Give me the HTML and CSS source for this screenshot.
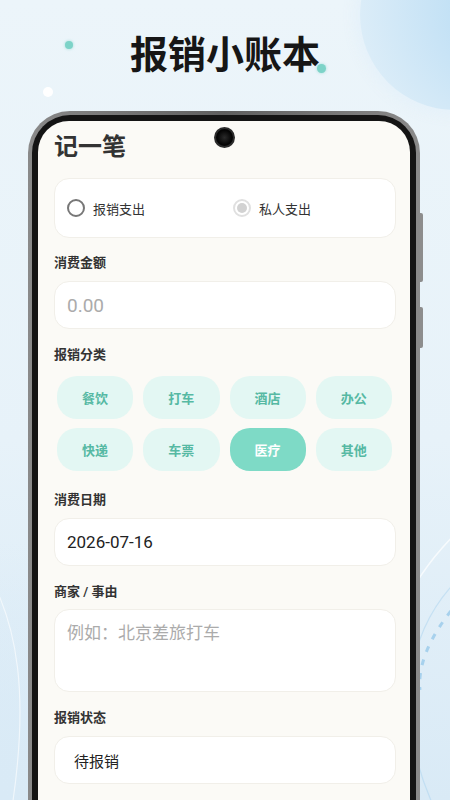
FILE: index.html
```html
<!DOCTYPE html>
<html lang="zh-CN">
<head>
    <meta charset="UTF-8">
    <meta name="viewport" content="width=device-width, initial-scale=1.0">
    <title>报销小账本</title>
    <link rel="stylesheet" href="styles.css">
</head>
<body>
    <div class="stage">
        <!-- decorative background bits -->
        <span class="bubble"></span>
        <span class="dot dot-teal dot-left"></span>
        <span class="dot dot-white"></span>
        <span class="dot dot-teal dot-right"></span>
        <svg class="swoosh" width="450" height="800" viewBox="0 0 450 800">
            <path d="M470 520 C 380 600, 360 700, 420 820" fill="none" stroke="#ffffff" stroke-opacity="0.7" stroke-width="1.5"/>
            <path d="M480 560 C 400 620, 390 720, 440 820" fill="none" stroke="#a9d4ef" stroke-opacity="0.5" stroke-width="1.2"/>
            <path d="M460 600 C 425 640, 418 670, 420 690" fill="none" stroke="#8ec4e8" stroke-opacity="0.7" stroke-width="3" stroke-dasharray="6 8"/>
            <path d="M-20 560 C 20 620, 30 700, 10 820" fill="none" stroke="#ffffff" stroke-opacity="0.6" stroke-width="1.2"/>
        </svg>

        <h1 class="promo-title">报销小账本</h1>

        <div class="phone">
            <div class="bezel">
                <div class="screen">
                    <span class="camera"></span>
                    <h2 class="page-title">记一笔</h2>

                    <div class="type-card">
                        <label class="radio">
                            <span class="radio-mark"></span>
                            <span>报销支出</span>
                        </label>
                        <label class="radio radio-disabled">
                            <span class="radio-mark"><span class="radio-dot"></span></span>
                            <span>私人支出</span>
                        </label>
                    </div>

                    <div class="field field-first">
                        <div class="field-label">消费金额</div>
                        <div class="input amount placeholder">0.00</div>
                    </div>

                    <div class="field">
                        <div class="field-label label-chips">报销分类</div>
                        <div class="chips">
                            <span class="chip">餐饮</span>
                            <span class="chip">打车</span>
                            <span class="chip">酒店</span>
                            <span class="chip">办公</span>
                            <span class="chip">快递</span>
                            <span class="chip">车票</span>
                            <span class="chip active">医疗</span>
                            <span class="chip">其他</span>
                        </div>
                    </div>

                    <div class="field field-after-chips">
                        <div class="field-label">消费日期</div>
                        <div class="input date">2026-07-16</div>
                    </div>

                    <div class="field">
                        <div class="field-label label-tight">商家 / 事由</div>
                        <div class="input textarea placeholder">例如：北京差旅打车</div>
                    </div>

                    <div class="field">
                        <div class="field-label">报销状态</div>
                        <div class="input select">待报销</div>
                    </div>
                </div>
            </div>
        </div>
    </div>
</body>
</html>
```

FILE: styles.css
```css
body {
    margin: 0;
    padding: 0;
    font-family: Roboto, "Noto Sans CJK SC", sans-serif;
    color: #333;
}

.stage {
    position: relative;
    width: 450px;
    height: 800px;
    overflow: hidden;
    background:
        radial-gradient(circle at 0% 100%, #d9eaf6 0, rgba(217, 234, 246, 0) 260px),
        linear-gradient(180deg, #ecf5fa 0%, #e7f2f9 55%, #d9eaf6 100%);
}

/* big soft circle in the top right corner */
.bubble {
    position: absolute;
    top: -80px;
    right: -100px;
    width: 190px;
    height: 190px;
    border-radius: 50%;
    background: radial-gradient(circle at 80% 45%, #b3daf3 0%, #c9e4f6 45%, #dcedf8 85%, #e4f1f9 100%);
    box-shadow: 0 0 12px 6px rgba(228, 241, 249, 0.9);
}

.dot {
    position: absolute;
    border-radius: 50%;
}

.dot-teal {
    background: #7dd3c8;
    box-shadow: 0 0 3px rgba(125, 211, 200, 0.7);
}

.dot-left {
    left: 65px;
    top: 41px;
    width: 8px;
    height: 8px;
}

.dot-right {
    left: 317px;
    top: 64px;
    width: 9px;
    height: 9px;
}

.dot-white {
    left: 43px;
    top: 87px;
    width: 10px;
    height: 10px;
    background: #fff;
}

.swoosh {
    position: absolute;
    left: 0;
    top: 0;
}

.promo-title {
    position: relative;
    margin: 0;
    padding-top: 31px;
    font-size: 38px;
    line-height: 48px;
    font-weight: 700;
    text-align: center;
    color: #161616;
}

.phone {
    position: relative;
    box-sizing: border-box;
    width: 392px;
    margin: 32px 0 0 28px;
    padding: 4px 4px 0;
    border-radius: 42px 42px 0 0;
    background: linear-gradient(90deg, #8a8a8a, #5f5f5f 50%, #8a8a8a);
}

/* side buttons */
.phone::before,
.phone::after {
    content: "";
    position: absolute;
    right: -3px;
    width: 3px;
    border-radius: 0 2px 2px 0;
    background: #8d8d8d;
}

.phone::before {
    top: 102px;
    height: 69px;
}

.phone::after {
    top: 196px;
    height: 41px;
}

.bezel {
    padding: 6px 6px 0;
    border-radius: 38px 38px 0 0;
    background: #141414;
}

.screen {
    position: relative;
    height: 720px;
    padding: 11px 14px 0 16px;
    border-radius: 31px 31px 0 0;
    background: #fbfaf6;
}

.camera {
    position: absolute;
    left: 176px;
    top: 6px;
    width: 17px;
    height: 17px;
    border-radius: 50%;
    background: radial-gradient(circle at 50% 50%, #2a2a2a 0, #050505 60%);
    border: 2px solid #2b2b2b;
}

.page-title {
    margin: 0;
    font-size: 24px;
    line-height: 30px;
    font-weight: 700;
    color: #333;
}

.type-card {
    display: grid;
    grid-template-columns: 166px 1fr;
    align-items: center;
    height: 60px;
    box-sizing: border-box;
    margin-top: 16px;
    padding: 0 12px;
    background: #fff;
    border: 1px solid #f1efe9;
    border-radius: 15px;
}

.radio {
    display: flex;
    align-items: center;
    gap: 8px;
    font-size: 13px;
    color: #333;
}

.radio-mark {
    display: flex;
    align-items: center;
    justify-content: center;
    width: 18px;
    height: 18px;
    box-sizing: border-box;
    border: 2px solid #777;
    border-radius: 50%;
}

.radio-disabled .radio-mark {
    border-color: #e0e0e0;
}

.radio-dot {
    width: 10px;
    height: 10px;
    border-radius: 50%;
    background: #d2d2d2;
}

.field {
    margin-top: 16px;
}

.field-first {
    margin-top: 15px;
}

.field-after-chips {
    margin-top: 19px;
}

.field-label {
    font-size: 13px;
    line-height: 20px;
    font-weight: 600;
    color: #333;
    margin-bottom: 8px;
}

.label-chips {
    margin-bottom: 11px;
}

.label-tight {
    margin-bottom: 7px;
}

.input {
    display: flex;
    align-items: center;
    height: 48px;
    box-sizing: border-box;
    padding: 0 12px;
    background: #fff;
    border: 1px solid #f1efe9;
    border-radius: 15px;
    color: #222;
}

.amount {
    font-size: 19px;
}

.date {
    font-size: 17px;
}

.placeholder {
    color: #ababab;
}

.textarea {
    align-items: flex-start;
    height: 83px;
    padding-top: 11px;
    font-size: 17px;
    line-height: 24px;
}

.select {
    padding-left: 19px;
    font-size: 15px;
}

.chips {
    display: grid;
    grid-template-columns: repeat(4, 1fr);
    column-gap: 10px;
    row-gap: 9px;
    margin: 0 4px 0 3px;
}

.chip {
    display: flex;
    align-items: center;
    justify-content: center;
    height: 43px;
    border-radius: 20px;
    background: #e3f7f3;
    color: #56b9a3;
    font-size: 13px;
    font-weight: 700;
}

.chip.active {
    background: #7edac6;
    color: #fff;
}
```
